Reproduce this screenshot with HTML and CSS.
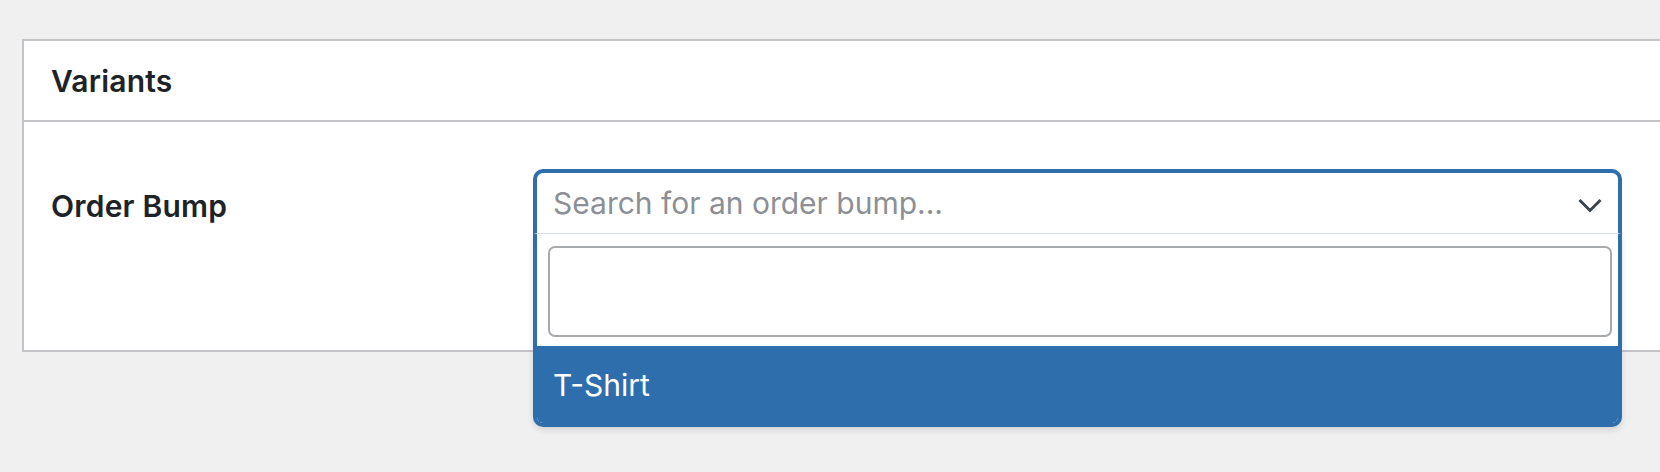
FILE: index.html
```html
<!DOCTYPE html>
<html lang="en">
<head>
  <meta charset="UTF-8">
  <title>Variants</title>
  <link rel="stylesheet" href="styles.css">
</head>
<body>
  <div class="card">
    <div class="card-header">
      <h2>Variants</h2>
    </div>
    <div class="card-body">
      <div class="field-row">
        <label class="field-label">Order Bump</label>
        <div class="select-wrap">
          <div class="select-box">
            <span class="placeholder">Search for an order bump...</span>
            <svg class="chevron" width="24" height="15" viewBox="0 0 24 15">
              <path d="M1.5 2 L12 12.5 L22.5 2" fill="none" stroke="#3c434a" stroke-width="3"/>
            </svg>
          </div>
          <div class="dropdown">
            <div class="dropdown-search">
              <input type="text" class="search-input">
            </div>
            <ul class="options">
              <li class="option highlighted">T-Shirt</li>
            </ul>
          </div>
        </div>
      </div>
    </div>
  </div>
</body>
</html>
```

FILE: styles.css
```css
html, body { margin: 0; height: 100%; overflow: hidden;}
body { background: #f0f0f1; font-family: "Inter", "Liberation Sans", Arial, sans-serif; color: #1d2327;}
.card { margin: 39px 0 0 22px; width: 1700px; background: #fff; border: 2px solid #c3c4c7;}
.card-header { height: 79px; display: flex; align-items: center; padding-left: 27px; border-bottom: 2px solid #c3c4c7;}
.card-header h2 { margin: 0; font-size: 30px; font-weight: 600; letter-spacing: 0.2px;}
.card-body { height: 228px; padding: 47px 0 0 27px; box-sizing: border-box;}
.field-row { display: flex; align-items: flex-start;}
.field-label { width: 482px; font-size: 30px; font-weight: 600; padding-top: 19px; letter-spacing: 0.2px;}
.select-wrap { position: relative; width: 1089px;}
.select-box { height: 65px; box-sizing: border-box; border: 4px solid #2e6ead; border-bottom: 1px solid #dce3ea; border-radius: 10px 10px 0 0; display: flex; align-items: center; justify-content: space-between; padding: 0 16px 0 16px;}
.placeholder { font-size: 30px; color: #8c8f94;}
.chevron { margin-top: 4px;}
.dropdown { position: absolute; left: 0; right: 0; top: 65px; background: #fff; border: 4px solid #2e6ead; border-top: none; border-radius: 0 0 10px 10px; box-shadow: 0 3px 6px rgba(0,0,0,0.12); overflow: hidden;}
.dropdown-search { padding: 12px 6px 9px 11px;}
.search-input { display: block; width: 100%; height: 91px; box-sizing: border-box; border: 2px solid #a7aaad; border-radius: 7px; background: #fff; outline: none;}
.options { list-style: none; margin: 0; padding: 0;}
.option { height: 77px; display: flex; align-items: center; padding-left: 16px; font-size: 30px;}
.option.highlighted { background: #2e6ead; color: #fff;}
```
